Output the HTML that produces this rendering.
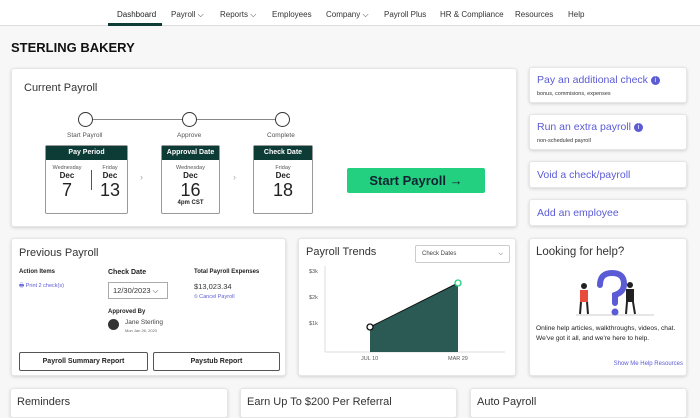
<!DOCTYPE html>
<html><head><style>
*{box-sizing:border-box;margin:0;padding:0}
body{width:700px;height:400px;overflow:hidden;background:#f7f7f7;font-family:"Liberation Sans",sans-serif;color:#222;position:relative}
.a{position:absolute}
.card{position:absolute;background:#fff;border:1px solid #e6e6e6;border-radius:3px;box-shadow:0 1px 3px rgba(0,0,0,.15)}
.nav{position:absolute;left:0;top:0;width:700px;height:26px;background:#fff;border-bottom:1px solid #ddd}
.nav span{position:absolute;top:10px;font-size:8px;color:#333}
.box{position:absolute;border:1px solid #999;border-radius:2px;background:#fff;text-align:center}
.box .h{background:#0d3b36;color:#fff;font-size:7px;font-weight:bold;height:14px;line-height:14px}
.sm{font-size:5.5px;color:#555}
.mo{font-size:8px;font-weight:bold}
.big{font-size:18px;line-height:20px}
.circ{position:absolute;width:15px;height:15px;border:1.5px solid #333;border-radius:50%;background:#fff}
.lbl{position:absolute;font-size:6.5px;color:#555}
.blue{color:#5b5bd6}
.qa{font-size:10.5px;color:#5b5bd6;position:absolute;left:7px}
.btn{position:absolute;border:1px solid #555;border-radius:2px;background:#fff;font-size:7px;font-weight:bold;text-align:center;line-height:17px}
</style></head><body>
<div class="nav">
<span style="left:117px;color:#222">Dashboard</span>
<span style="left:171px">Payroll ⌵</span>
<span style="left:220px">Reports ⌵</span>
<span style="left:272px">Employees</span>
<span style="left:326px">Company ⌵</span>
<span style="left:384px">Payroll Plus</span>
<span style="left:440px">HR &amp; Compliance</span>
<span style="left:515px">Resources</span>
<span style="left:568px">Help</span>
<div class="a" style="left:108px;top:23px;width:54px;height:3px;background:#0d3b36"></div>
</div>
<div class="a" style="left:11px;top:40px;font-size:13px;font-weight:bold;color:#111">STERLING BAKERY</div>

<div class="card" style="left:11px;top:68px;width:506px;height:159px">
<div class="a" style="left:12px;top:13px;font-size:11px;color:#333">Current Payroll</div>
<div class="a" style="left:74px;top:50px;width:196px;height:1px;background:#888"></div>
<div class="circ" style="left:66px;top:43px"></div>
<div class="circ" style="left:170px;top:43px"></div>
<div class="circ" style="left:263px;top:43px"></div>
<div class="lbl" style="left:55px;top:63px">Start Payroll</div>
<div class="lbl" style="left:165px;top:63px">Approve</div>
<div class="lbl" style="left:255px;top:63px">Complete</div>
<div class="box" style="left:33px;top:76px;width:83px;height:69px"><div class="h">Pay Period</div>
<div class="a" style="left:0;top:19px;width:42px"><div class="sm">Wednesday</div><div class="mo">Dec</div><div class="big">7</div></div>
<div class="a" style="left:45px;top:24px;width:1px;height:20px;background:#555"></div>
<div class="a" style="left:44px;top:19px;width:40px"><div class="sm">Friday</div><div class="mo">Dec</div><div class="big">13</div></div></div>
<div class="a" style="left:128px;top:103px;color:#aaa;font-size:9px">›</div>
<div class="box" style="left:149px;top:76px;width:59px;height:69px"><div class="h">Approval Date</div>
<div style="margin-top:5px" class="sm">Wednesday</div><div class="mo">Dec</div><div class="big">16</div><div style="font-size:6px;font-weight:bold">4pm CST</div></div>
<div class="a" style="left:221px;top:103px;color:#aaa;font-size:9px">›</div>
<div class="box" style="left:241px;top:76px;width:60px;height:69px"><div class="h">Check Date</div>
<div style="margin-top:5px" class="sm">Friday</div><div class="mo">Dec</div><div class="big">18</div></div>
<div class="a" style="left:335px;top:99px;width:138px;height:25px;background:#22d07f;border-radius:2px;font-size:13px;font-weight:bold;color:#123;text-align:center;line-height:25px">Start Payroll →</div>
</div>

<div class="card" style="left:529px;top:67px;width:158px;height:36px"><div class="qa" style="top:6px">Pay an additional check <span style="display:inline-block;width:9px;height:9px;border-radius:50%;background:#5b5bd6;color:#fff;font-size:7px;text-align:center;line-height:9px;vertical-align:1px">i</span></div><div class="a" style="left:7px;top:23px;font-size:5.5px;color:#333">bonus, commisions, expenses</div></div>
<div class="card" style="left:529px;top:114px;width:158px;height:36px"><div class="qa" style="top:6px">Run an extra payroll <span style="display:inline-block;width:9px;height:9px;border-radius:50%;background:#5b5bd6;color:#fff;font-size:7px;text-align:center;line-height:9px;vertical-align:1px">i</span></div><div class="a" style="left:7px;top:23px;font-size:5.5px;color:#333">non-scheduled payroll</div></div>
<div class="card" style="left:529px;top:161px;width:158px;height:27px"><div class="qa" style="top:7px">Void a check/payroll</div></div>
<div class="card" style="left:529px;top:199px;width:158px;height:27px"><div class="qa" style="top:7px">Add an employee</div></div>
<div class="card" style="left:529px;top:238px;width:158px;height:138px">
<div class="a" style="left:6px;top:7px;font-size:11.5px;color:#333">Looking for help?</div>
<svg class="a" style="left:40px;top:30px" width="90" height="50"><line x1="6" y1="46" x2="84" y2="46" stroke="#ccc"/><path d="M30 16 q0-12 12-12 q12 0 12 11 q0 8-9 11 v8" fill="none" stroke="#5b5bd6" stroke-width="6" stroke-linecap="round"/><circle cx="45" cy="43" r="3.5" fill="#5b5bd6"/><circle cx="14" cy="17" r="3" fill="#222"/><rect x="10" y="21" width="8" height="12" fill="#e74c3c"/><path d="M11 33 l-1 12 M17 33 l1 12" stroke="#222" stroke-width="2"/><circle cx="60" cy="16" r="3" fill="#222"/><rect x="56" y="20" width="8" height="13" fill="#222"/><path d="M57 33 l-1 12 M63 33 l2 12" stroke="#222" stroke-width="2"/></svg>
<div class="a" style="left:6px;top:85px;font-size:6.6px;line-height:10px;color:#222;width:150px">Online help articles, walkthroughs,  videos, chat. We've got it all, and we're here to help.</div>
<div class="a blue" style="right:3px;top:122px;font-size:6px">Show Me Help Resources</div>
</div>

<div class="card" style="left:11px;top:238px;width:275px;height:138px">
<div class="a" style="left:7px;top:8px;font-size:11px;color:#333">Previous Payroll</div>
<div class="a" style="left:7px;top:30px;font-size:6px;font-weight:bold">Action Items</div>
<div class="a blue" style="left:7px;top:43px;font-size:5.5px">🖶 Print 2 check(s)</div>
<div class="a" style="left:96px;top:30px;font-size:7px;font-weight:bold">Check Date</div>
<div class="a" style="left:96px;top:43px;width:60px;height:17px;border:1px solid #aaa;font-size:7.5px;line-height:15px;padding-left:4px;color:#333">12/30/2023 ⌵</div>
<div class="a" style="left:182px;top:30px;font-size:6px;font-weight:bold">Total Payroll Expenses</div>
<div class="a" style="left:182px;top:43px;font-size:7.5px;color:#333">$13,023.34</div>
<div class="a blue" style="left:182px;top:55px;font-size:5.5px">⦸ Cancel Payroll</div>
<div class="a" style="left:96px;top:70px;font-size:6px;font-weight:bold">Approved By</div>
<div class="a" style="left:96px;top:80px;width:11px;height:11px;border-radius:50%;background:#333"></div>
<div class="a" style="left:113px;top:80px;font-size:6.5px;color:#444">Jane Sterling</div>
<div class="a" style="left:113px;top:89px;font-size:4px;color:#666">Mon Jan 26, 2023</div>
<div class="btn" style="left:7px;top:113px;width:129px;height:19px">Payroll Summary Report</div>
<div class="btn" style="left:141px;top:113px;width:127px;height:19px">Paystub Report</div>
</div>

<div class="card" style="left:298px;top:238px;width:218px;height:138px">
<div class="a" style="left:7px;top:7px;font-size:11px;color:#333">Payroll Trends</div>
<div class="a" style="left:116px;top:6px;width:95px;height:18px;border:1px solid #ccc;border-radius:2px;font-size:6px;line-height:16px;padding-left:6px;color:#444">Check Dates<span style="position:absolute;right:6px">⌵</span></div>
<div class="a" style="left:10px;top:30px;font-size:5.5px;color:#555">$3k</div>
<div class="a" style="left:10px;top:56px;font-size:5.5px;color:#555">$2k</div>
<div class="a" style="left:10px;top:82px;font-size:5.5px;color:#555">$1k</div>
<svg class="a" style="left:0;top:0" width="218" height="138"><line x1="26" y1="27" x2="26" y2="113" stroke="#ddd"/><line x1="26" y1="113" x2="206" y2="113" stroke="#ddd"/><polygon points="71,88 159,44 159,113 71,113" fill="#2a5a53"/><line x1="71" y1="88" x2="159" y2="44" stroke="#111" stroke-width="1"/><circle cx="71" cy="88" r="3" fill="#fff" stroke="#111" stroke-width="1.3"/><circle cx="159" cy="44" r="3" fill="#fff" stroke="#22d07f" stroke-width="1.3"/></svg>
<div class="a" style="left:62px;top:117px;font-size:5.5px;color:#555">JUL 10</div>
<div class="a" style="left:149px;top:117px;font-size:5.5px;color:#555">MAR 29</div>
</div>

<div class="card" style="left:10px;top:388px;width:218px;height:30px"><div class="a" style="left:6px;top:7px;font-size:11px;color:#333">Reminders</div></div>
<div class="card" style="left:240px;top:388px;width:217px;height:30px"><div class="a" style="left:6px;top:7px;font-size:11px;color:#333">Earn Up To $200 Per Referral</div></div>
<div class="card" style="left:470px;top:388px;width:217px;height:30px"><div class="a" style="left:6px;top:7px;font-size:11px;color:#333">Auto Payroll</div></div>
</body></html>
